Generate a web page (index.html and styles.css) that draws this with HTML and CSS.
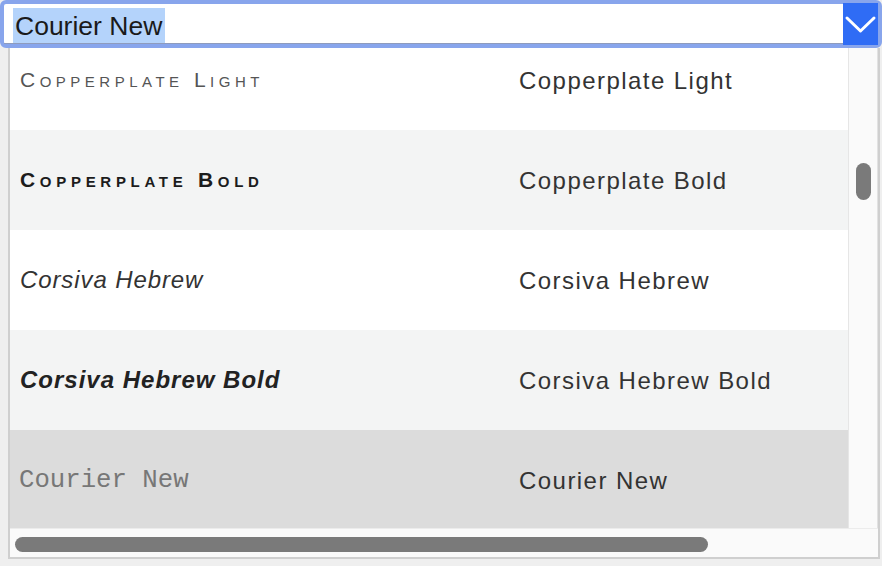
FILE: index.html
```html
<!DOCTYPE html>
<html lang="en">
<head>
  <meta charset="UTF-8" />
  <title>Font Picker</title>
  <meta name="viewport" content="width=device-width, initial-scale=1.0" />
  <link rel="stylesheet" href="styles.css">
</head>
<body>
  <div class="picker">

    <!-- combo field with focus ring -->
    <div class="combo">
      <div class="field"><span class="selected-text">Courier New</span></div>
      <button class="drop" type="button" aria-label="Open list">
        <svg width="35" height="40" viewBox="0 0 35 40">
          <polyline points="4,14 17.5,27 31,14" fill="none" stroke="#fff" stroke-width="3" stroke-linecap="round" stroke-linejoin="round" />
        </svg>
      </button>
    </div>

    <!-- font list -->
    <div class="listbox">
      <div class="viewport">
        <div class="rows">
          <div class="row">
            <span class="sample copper-light">Copperplate Light</span>
            <span class="name">Copperplate Light</span>
          </div>
          <div class="row alt">
            <span class="sample copper-bold">Copperplate Bold</span>
            <span class="name">Copperplate Bold</span>
          </div>
          <div class="row">
            <span class="sample corsiva">Corsiva Hebrew</span>
            <span class="name">Corsiva Hebrew</span>
          </div>
          <div class="row alt">
            <span class="sample corsiva-bold">Corsiva Hebrew Bold</span>
            <span class="name">Corsiva Hebrew Bold</span>
          </div>
          <div class="row active">
            <span class="sample courier">Courier New</span>
            <span class="name">Courier New</span>
          </div>
        </div>
      </div>
      <div class="vbar"><div class="vthumb"></div></div>
      <div class="hbar"><div class="hthumb"></div></div>
    </div>

  </div>
</body>
</html>
```

FILE: styles.css
```css
* {
  box-sizing: border-box;
}

body {
  margin: 0;
  background: #efefef;
  font-family: "Liberation Sans", Arial, sans-serif;
  color: #333;
}

.picker {
  width: 882px;
  height: 566px;
}

/* combo */
.combo {
  display: flex;
  height: 48px;
  border: 4px solid #88a5ec;
  border-radius: 6px;
  background: #fff;
  position: relative;
  z-index: 1;
}

.field {
  flex: 1;
  padding: 4px 0 0 9px;
  border-bottom: 1px solid #8e9bbd;
}

.selected-text {
  display: inline-block;
  background: #b4d3fb;
  color: #1a1a1a;
  font-size: 26.5px;
  line-height: 33px;
  padding: 2px 3px 0 2px;
}

.drop {
  flex: 0 0 35px;
  margin: -1px 0 -1px 0;
  padding: 0;
  border: none;
  background: #2f6cf5;
  display: flex;
  align-items: center;
  justify-content: center;
}

/* list */
.listbox {
  margin: 0 2px 0 8px;
  height: 511px;
  border: 2px solid #cfcfcf;
  border-top: none;
  display: grid;
  grid-template-columns: 838px 30px;
  grid-template-rows: 480px 29px;
  background: #fafafa;
}

.viewport {
  overflow: hidden;
  background: #fff;
}

.rows {
  margin-top: -18px;
}

.row {
  height: 100px;
  display: grid;
  grid-template-columns: 499px 1fr;
  align-items: center;
  padding-left: 10px;
  background: #fff;
}

.row.alt {
  background: #f3f4f4;
}

.row.active {
  background: #dcdcdc;
}

.name {
  font-size: 24px;
  letter-spacing: 1.45px;
  color: #333;
  padding-top: 2px;
}

.sample {
  white-space: nowrap;
}

.copper-light {
  font-size: 21px;
  font-variant: small-caps;
  letter-spacing: 4.5px;
  color: #555;
}

.copper-bold {
  font-size: 21px;
  font-weight: bold;
  font-variant: small-caps;
  letter-spacing: 4.7px;
  color: #1c1c1c;
}

.corsiva {
  font-size: 24px;
  font-style: italic;
  letter-spacing: 0.9px;
  color: #333;
}

.corsiva-bold {
  font-size: 24px;
  font-style: italic;
  font-weight: bold;
  letter-spacing: 1px;
  color: #222;
}

.courier {
  font-family: "Liberation Mono", "Courier New", monospace;
  font-size: 25.7px;
  color: #777;
  margin-left: -1px;
}

/* scrollbars */
.vbar {
  border-left: 1px solid #e6e6e6;
  border-right: 1px solid #e2e2e2;
  background: #fafafa;
  display: flex;
  justify-content: center;
  padding-top: 115px;
}

.vthumb {
  width: 15px;
  height: 37px;
  border-radius: 8px;
  background: #7a7a7a;
}

.hbar {
  grid-column: 1 / -1;
  border-top: 1px solid #ececec;
  background: #fafafa;
  padding: 8px 0 0 5px;
}

.hthumb {
  width: 693px;
  height: 15px;
  border-radius: 8px;
  background: #7a7a7a;
}
```
